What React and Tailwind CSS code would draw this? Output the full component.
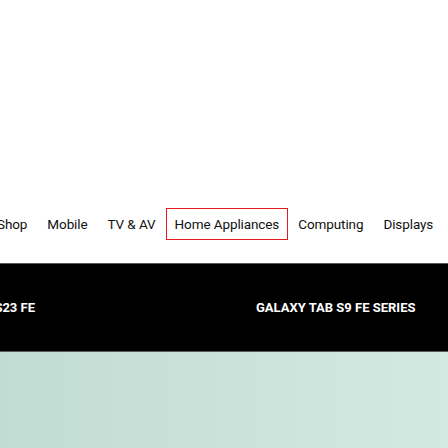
import React from 'react';

const navItems = ['Shop', 'Mobile', 'TV & AV', 'Home Appliances', 'Computing', 'Displays'];

const App = () => {
  return (
    <div className="w-[448px] h-[448px] overflow-hidden bg-white flex flex-col" style={{ fontFamily: 'Roboto, Arial, sans-serif' }}>
      {/* top space */}
      <div className="h-[208px]" />

      {/* category nav */}
      <nav className="flex h-[32px] ml-[-13px] whitespace-nowrap">
        {navItems.map((item) => (
          <div
            key={item}
            className={
              item === 'Home Appliances'
                ? 'flex items-center px-[8px] border border-[#e41b1b] text-[13.5px] tracking-[-0.1px] text-[#111]'
                : 'flex items-center px-[9px] border border-transparent text-[13.5px] tracking-[-0.1px] text-[#111]'
            }
          >
            {item}
          </div>
        ))}
      </nav>

      <div className="h-[23px]" />

      {/* product strip */}
      <div className="h-[89px] bg-black border-y border-[#5a5a5a] flex items-center whitespace-nowrap">
        <div className="w-[35px] flex justify-end shrink-0">
          <span className="text-white font-bold text-[13px]">GALAXY S23 FE</span>
        </div>
        <span className="ml-[221px] text-white font-bold text-[13px]">GALAXY TAB S9 FE SERIES</span>
      </div>

      {/* hero bg */}
      <div className="flex-1 bg-gradient-to-r from-[#c1dcd2] to-[#d2e9e1]" />
    </div>
  );
};

export default App;
